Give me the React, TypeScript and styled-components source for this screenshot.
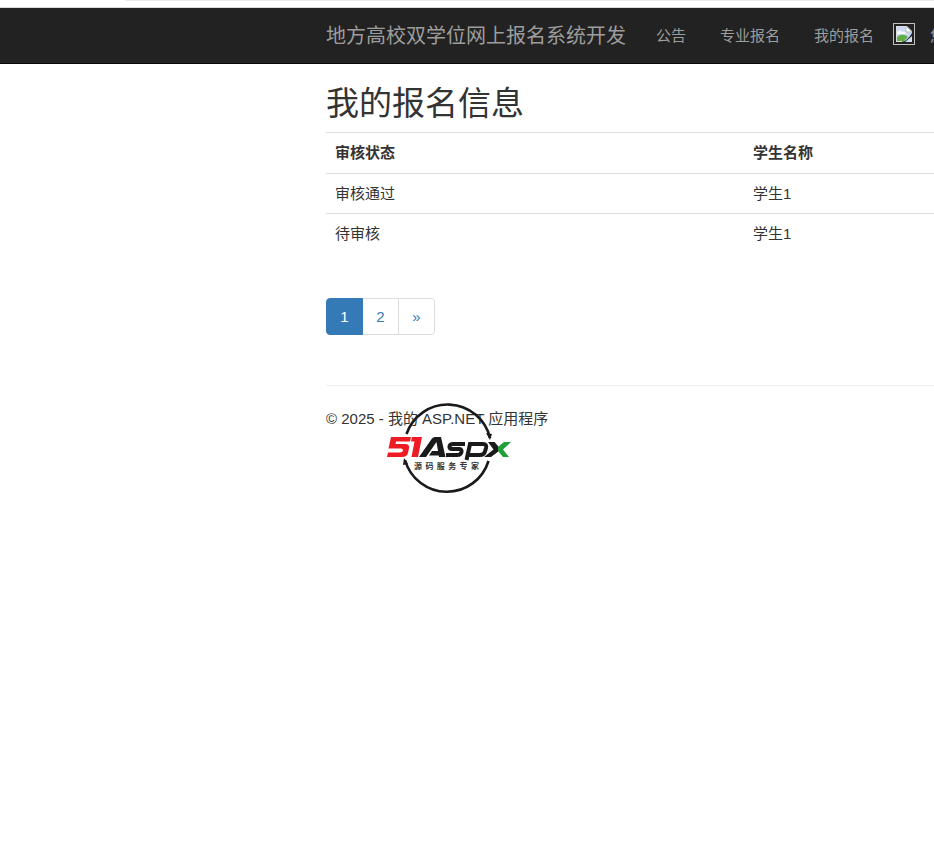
import React from "react";
import styled, { createGlobalStyle } from "styled-components";

const GlobalStyle = createGlobalStyle`
  * { box-sizing: border-box; }
  body {
    margin: 0;
    background: #fff;
    color: #333;
    font: 400 15px/22px "Liberation Sans", "Noto Sans CJK SC", sans-serif;
    overflow-x: hidden;
  }
`;

const Page = styled.div`
  width: 100%;
  overflow: hidden;
`;

const BrowserEdge = styled.div`
  height: 8px;
  border-bottom: 1px solid #d9d9de;
  display: flex;
`;

const EdgeShade = styled.div`
  height: 1px;
  flex: 1;
  margin-left: 125px;
  background: #e9e9ec;
`;

const NavBar = styled.header`
  display: flex;
  height: 56px;
  padding-left: 326px;
  background: #222;
  border-bottom: 1px solid #080808;
`;

const NavLink = styled.a<{ $brand?: boolean }>`
  flex: none;
  padding: ${(p) => (p.$brand ? "17px 13px 16px 0" : "17px 17px 16px")};
  color: #9d9d9d;
  font-size: ${(p) => (p.$brand ? 20 : 15)}px;
  line-height: 22px;
  text-decoration: none;
  white-space: nowrap;
`;

const Avatar = styled.svg`
  flex: none;
  width: 22px;
  height: 22px;
  margin: 15px -2px 0 2px;
`;

const Container = styled.main`
  margin-left: 326px;
`;

const Title = styled.h2`
  margin: 0;
  padding: 21px 0 9px;
  font-size: 33px;
  line-height: 38px;
  font-weight: 400;
`;

const Table = styled.table`
  width: 1254px;
  table-layout: fixed;
  border-collapse: collapse;
  text-align: left;
`;

const HeadCell = styled.th`
  padding: 9px;
  border-top: 1px solid #ddd;
  font-weight: 700;
`;

const Cell = styled.td`
  padding: 9px 9px 8px;
  border-top: 1px solid #ddd;
`;

const Pagination = styled.nav`
  display: flex;
  margin: 45px 0 50px;
`;

const PageLink = styled.a<{ $active?: boolean }>`
  min-width: 37px;
  height: 37px;
  margin-right: -1px;
  padding: 7px 13px;
  border: 1px solid ${(p) => (p.$active ? "#337ab7" : "#ddd")};
  background: ${(p) => (p.$active ? "#337ab7" : "#fff")};
  color: ${(p) => (p.$active ? "#fff" : "#337ab7")};
  text-align: center;
  text-decoration: none;
  &:first-child { border-radius: 4px 0 0 4px; z-index: 1; }
  &:last-child { border-radius: 0 4px 4px 0; }
`;

const Footer = styled.footer`
  position: relative;
  padding: 22px 0 80px;
  border-top: 1px solid #eee;
`;

const FooterText = styled.p`
  margin: 0;
`;

const Watermark = styled.svg`
  position: absolute;
  left: 58px;
  top: 14px;
  width: 132px;
  height: 98px;
`;

const rows = [
  { status: "审核通过", student: "学生1" },
  { status: "待审核", student: "学生1" },
];

function BrokenImage() {
  return (
    <Avatar viewBox="0 0 22 22" role="img" aria-label="头像">
      <rect x=".5" y=".5" width="21" height="21" fill="#222" stroke="#c0c0c0" />
      <path d="M3 3h11l5 5v11H3z" fill="#c9d9f3" />
      <path d="M4 10c1-3 4-3 5-1 2-1 4 0 4 2H4z" fill="#f4f8ff" />
      <path d="M3 19v-4c4-4 8-4 12-1l-5 5z" fill="#5fae45" />
      <path d="M19 10v3l-7 6H9c4-1 7-4 10-9z" fill="#222" />
      <path d="M19 15v4h-5z" fill="#d8e2ee" />
      <path d="M13 3v6h6z" fill="#fff" stroke="#bbb" />
      <path d="M3.500 19V3.500H13M3 18.500h6" fill="none" stroke="#ddd" />
    </Avatar>
  );
}

function Logo() {
  return (
    <Watermark viewBox="384 400 132 98" role="img" aria-label="51Aspx 源码服务专家">
      <g fill="none" stroke="#1a1a1a" strokeWidth="2.6">
        <path d="M406.500 434A43.500 43.500 0 0 1 490 438" />
        <path d="M405 460A43.500 43.500 0 0 0 488.500 461" />
      </g>
      <path d="M486 433l6 1-2 6zM403 465l1-7 4 6z" fill="#1a1a1a" />
      <g fill="#ed1c24">
        <path d="M391 437H411L410 441.500H396L395.500 444H405Q410 444 409 448.500L408 453Q407 457 402 457H387L388 452.500H400Q402.500 452.500 403 450.500Q403 448.500 401 448.500H388.500Z" />
        <path d="M412 437H422L418 457H411.500L414.500 441.500H411Z" />
      </g>
      <g fill="#1a1a1a">
        <path d="M419 457L432 438.500Q433 437 435 437H441L445.500 457H439L436.500 442L426 457Z" />
        <path d="M432 451L429 455.500H439V451Z" />
      </g>
      <g fill="none" stroke="#1a1a1a" strokeWidth="4">
        <path d="M465 444H453Q450 444 449.500 446.500Q449 449 452 449H459Q462 449 461.500 452Q461 455 457 455H446" />
        <path d="M466.500 460L470 444H483Q487 444 486 448L485 451.500Q484 455 480 455H469" />
      </g>
      <path d="M488 442H494.500L501 449.500L491 457H484L493.500 449.500Z" fill="#1a1a1a" />
      <path d="M504 442H511L503 449.500L509 457H503L498 451V447Z" fill="#20a038" />
      <text x="414" y="469" fontSize="8" fontWeight="700" fill="#333">
        {[..."源码服务专家"].map((ch, i) => (
          <tspan key={ch} x={414 + i * 11.4}>{ch}</tspan>
        ))}
      </text>
    </Watermark>
  );
}

export default function App() {
  return (
    <>
      <GlobalStyle />
      <Page>
        <BrowserEdge><EdgeShade /></BrowserEdge>
        <NavBar>
          <NavLink href="#" $brand>地方高校双学位网上报名系统开发</NavLink>
          <NavLink href="#">公告</NavLink>
          <NavLink href="#">专业报名</NavLink>
          <NavLink href="#">我的报名</NavLink>
          <BrokenImage />
          <NavLink href="#">您</NavLink>
        </NavBar>
        <Container>
          <Title>我的报名信息</Title>
          <Table>
            <thead><tr><HeadCell>审核状态</HeadCell><HeadCell>学生名称</HeadCell><HeadCell aria-label="操作" /></tr></thead>
            <tbody>
              {rows.map((r) => (
                <tr key={r.status}><Cell>{r.status}</Cell><Cell>{r.student}</Cell><Cell /></tr>
              ))}
            </tbody>
          </Table>
          <Pagination aria-label="分页">
            <PageLink href="#" $active aria-current="page">1</PageLink>
            <PageLink href="#">2</PageLink>
            <PageLink href="#">»</PageLink>
          </Pagination>
          <Footer>
            <FooterText>© 2025 - 我的 ASP.NET 应用程序</FooterText>
            <Logo />
          </Footer>
        </Container>
      </Page>
    </>
  );
}
